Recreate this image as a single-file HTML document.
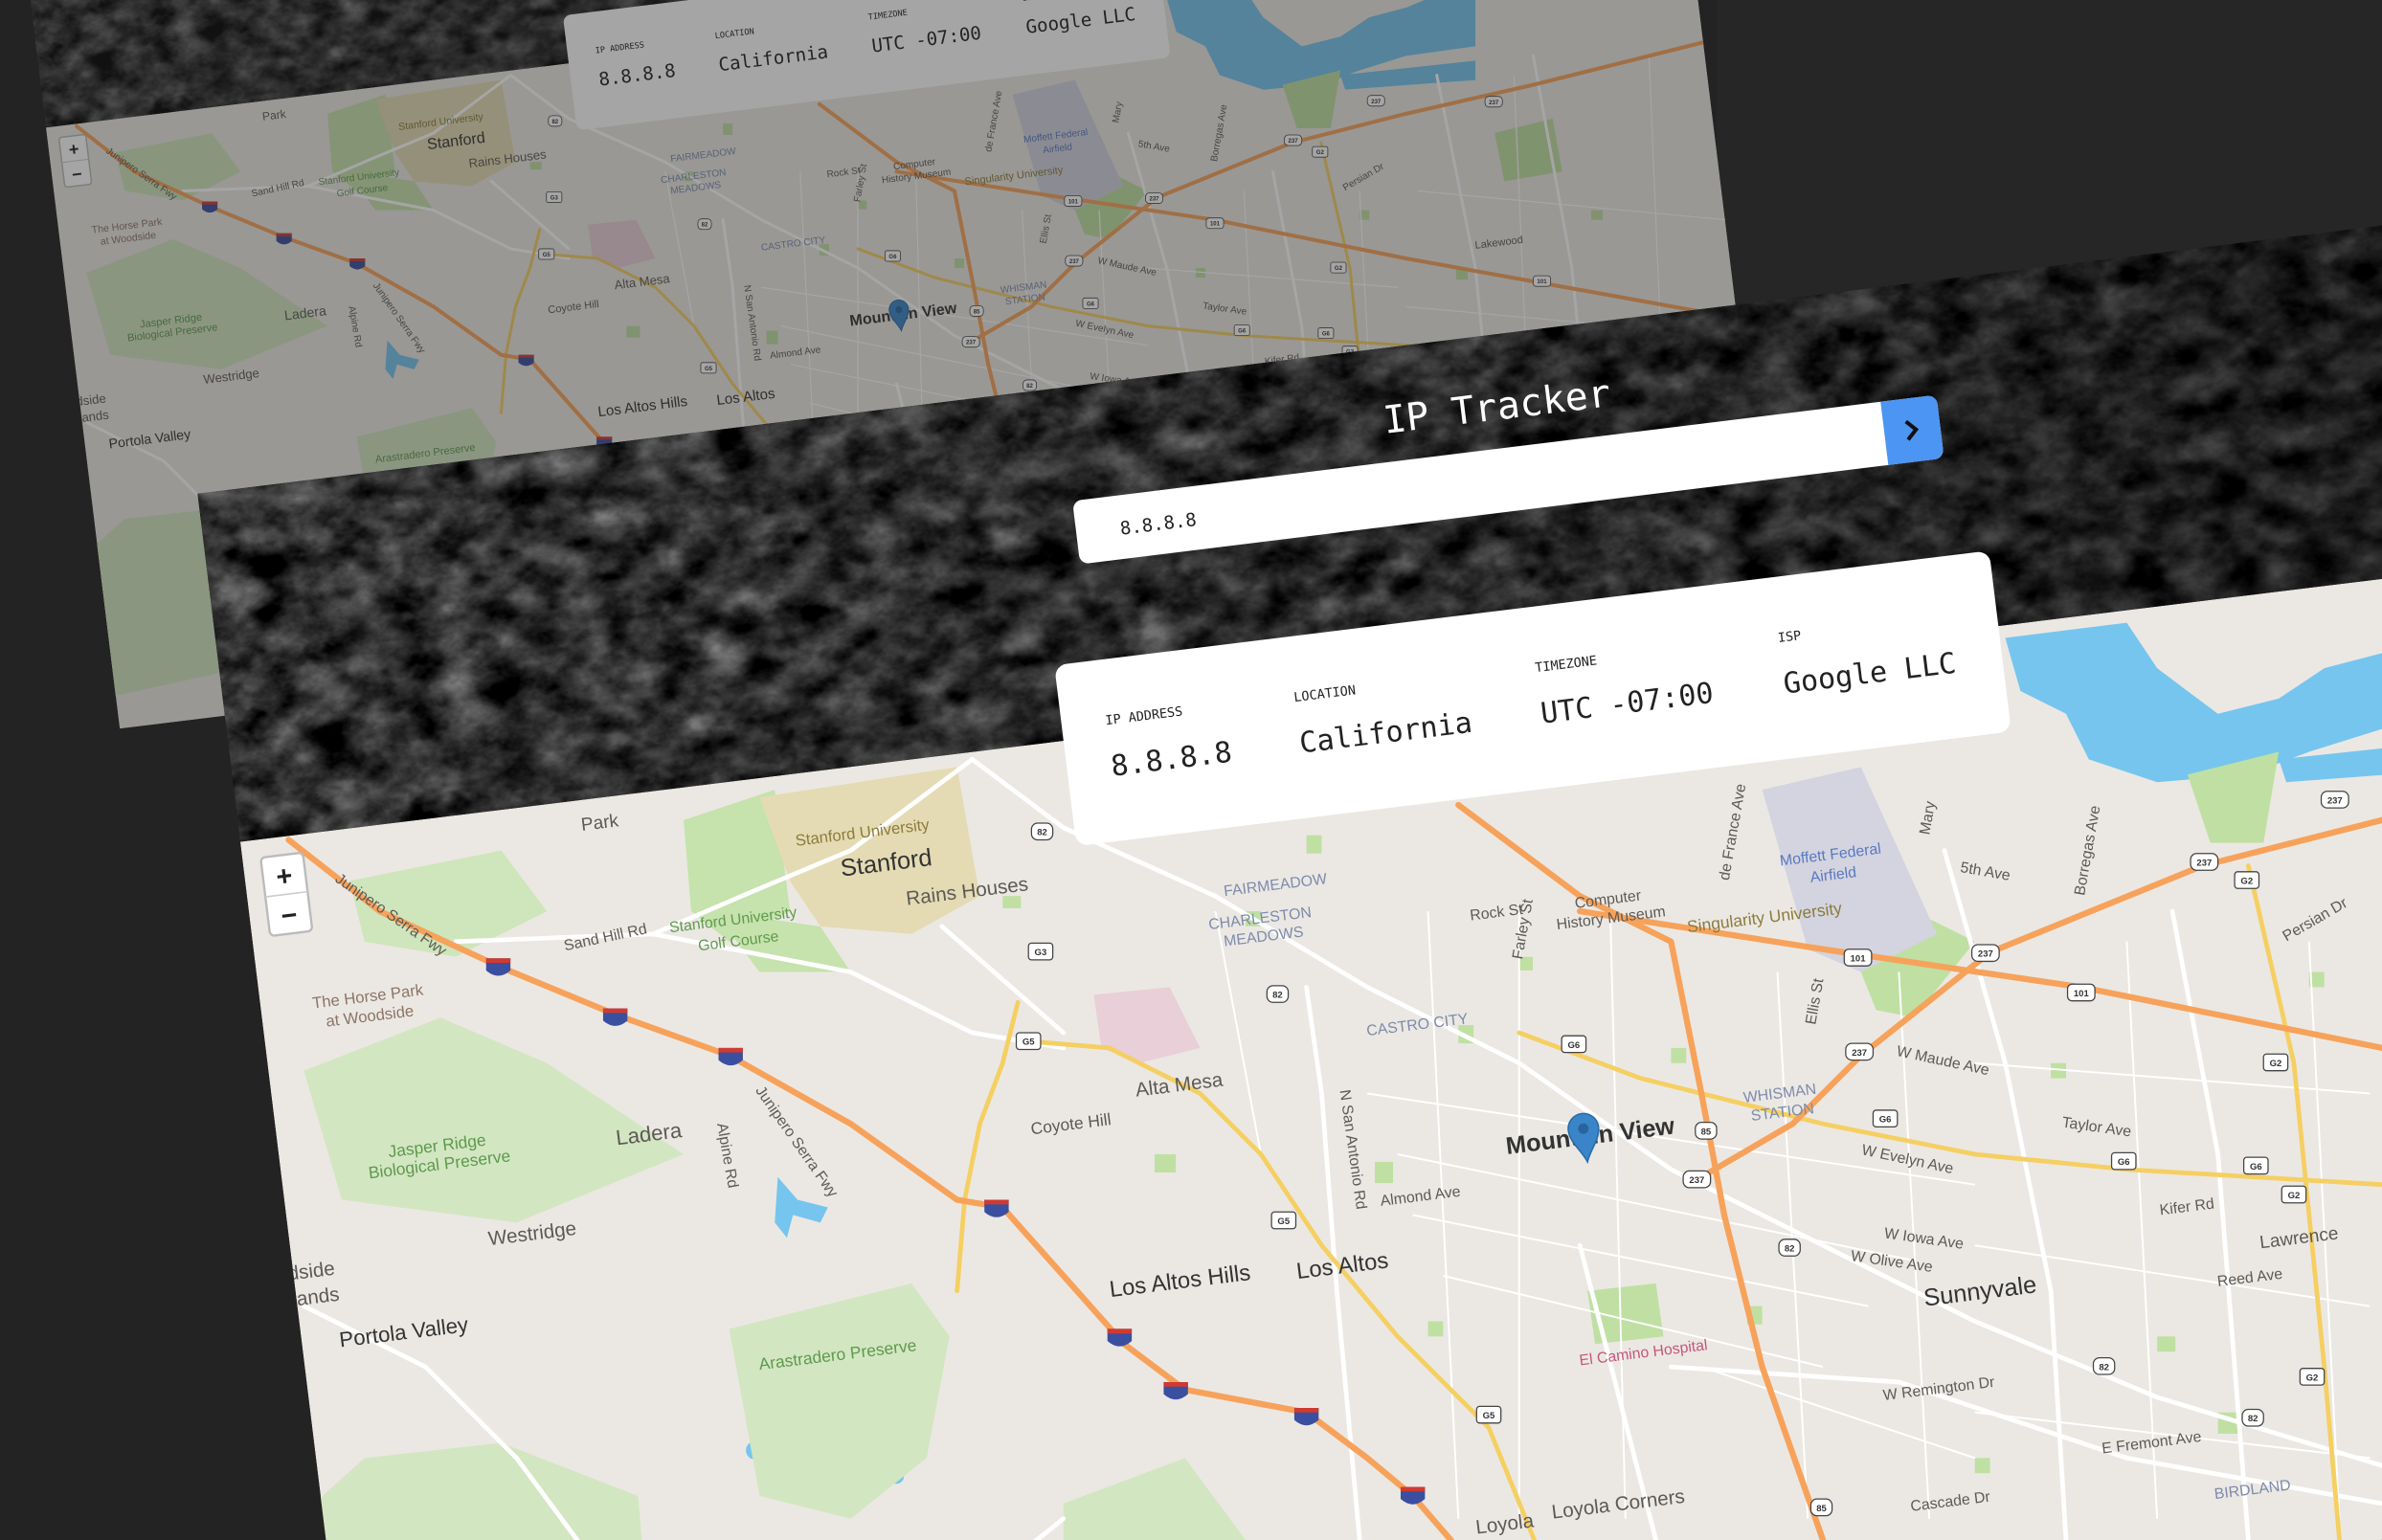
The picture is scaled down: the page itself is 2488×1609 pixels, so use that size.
<!DOCTYPE html>
<html><head><meta charset="utf-8"><style>
html,body{margin:0;padding:0;background:#232323;overflow:hidden;width:2488px;height:1609px}
svg{display:block;position:absolute;left:0;top:0}
.m{font-family:"DejaVu Sans Mono","Liberation Mono",monospace}
.l{font-family:"Liberation Sans Narrow","Liberation Sans",sans-serif;fill:#5d5a55}
.s{font-family:"Liberation Sans",sans-serif;font-size:6px;font-weight:bold;fill:#333;text-anchor:middle}
</style></head><body>
<svg width="2488" height="1609" viewBox="0 0 1568 1014" preserveAspectRatio="none" xmlns="http://www.w3.org/2000/svg">
<defs>
<filter id="tex" x="0" y="0" width="100%" height="100%" color-interpolation-filters="sRGB">
<feTurbulence type="fractalNoise" baseFrequency="0.035 0.05" numOctaves="5" seed="7"/>
<feColorMatrix type="matrix" values="0.33 0.33 0.33 0 0 0.33 0.33 0.33 0 0 0.33 0.33 0.33 0 0 0 0 0 0 1"/>
<feComponentTransfer><feFuncR type="linear" slope="1.3" intercept="-0.45"/><feFuncG type="linear" slope="1.3" intercept="-0.45"/><feFuncB type="linear" slope="1.3" intercept="-0.45"/></feComponentTransfer>
</filter>
<linearGradient id="hg" x1="0" y1="0" x2="1" y2="0"><stop offset="0" stop-color="#000" stop-opacity="0"/><stop offset="0.5" stop-color="#000" stop-opacity="0.2"/><stop offset="1" stop-color="#000" stop-opacity="0.6"/></linearGradient>
<clipPath id="mapclip"><rect x="0" y="231" width="1716" height="628"/></clipPath>
<clipPath id="hdclip"><rect x="0" y="0" width="1716" height="232"/></clipPath>
<g id="sh"><path d="M-8,-6 L8,-6 L8,2 Q0,9 -8,2Z" fill="#3a4fa0"/><path d="M-8,-6 L8,-6 L8,-3 L-8,-3Z" fill="#d03a30"/></g>
<g id="screen">
 <g clip-path="url(#hdclip)">
  <rect x="0" y="0" width="1716" height="232" fill="#161616"/>
  <rect x="0" y="0" width="1716" height="232" filter="url(#tex)"/>
  <rect x="0" y="0" width="1716" height="232" fill="url(#hg)"/>
 </g>
 <g clip-path="url(#mapclip)">
  <rect x="0" y="231" width="1716" height="628" fill="#ebe8e3"/>
  <g transform="rotate(7) translate(-130,-325)">
   <!-- water -->
   <path d="M1320,420 L1400,410 L1420,440 L1460,470 L1500,460 L1530,440 L1568,430 L1640,400 L1640,470 L1568,480 L1520,495 L1480,510 L1420,515 L1375,500 L1360,470 L1330,455 Z" fill="#76c5ef"/>
   <path d="M1500,500 L1640,485 L1640,505 L1505,515Z" fill="#76c5ef"/>
   <path d="M512,775 L525,790 L545,795 L540,805 L522,800 L518,815 L510,805Z" fill="#76c5ef"/>
   <path d="M235,725 L242,730 L250,752 L240,755Z" fill="#76c5ef"/>
   <circle cx="542" cy="585" r="7" fill="#76c5ef"/>
   <circle cx="497" cy="955" r="6" fill="#76c5ef"/>
   <circle cx="590" cy="972" r="5" fill="#76c5ef"/>
   <!-- greens -->
   <path d="M200,705 L290,670 L360,700 L450,760 L340,805 L225,790 Z" fill="#d3e6c2"/>
   <path d="M480,875 L600,845 L625,880 L610,960 L560,1000 L500,985 Z" fill="#d3e6c2"/>
   <path d="M230,580 L330,560 L360,600 L300,630 L240,620Z" fill="#cfe5bb"/>
   <path d="M450,540 L510,520 L520,600 L480,620 L455,600Z" fill="#c6e2ad"/>
   <path d="M500,525 L630,505 L645,590 L600,615 L540,610 L520,580Z" fill="#e4dbb4"/>
   <path d="M470,600 L540,610 L560,640 L500,640Z" fill="#c6e2ad"/>
   <path d="M1225,640 L1270,605 L1300,620 L1260,670 L1235,665Z" fill="#bfe0a2"/>
   <path d="M1440,510 L1500,495 L1490,555 L1455,555Z" fill="#bfe0a2"/>
   <path d="M180,1014 L240,960 L330,950 L420,985 L430,1100 L200,1150Z" fill="#d3e6c2"/>
   <path d="M700,990 L780,960 L820,1014 L800,1080 L700,1060Z" fill="#d3e6c2"/>
   <path d="M720,655 L770,650 L790,690 L750,700 L725,690Z" fill="#e9cfd7"/>
   <path d="M1045,850 L1090,845 L1095,880 L1050,885Z" fill="#bfe0a2"/>
   <path d="M1160,520 L1225,505 L1275,615 L1225,640 L1190,625Z" fill="#d3d4e0"/>
   <path d="M1660,560 L1720,545 L1730,600 L1670,610Z" fill="#bfe0a2"/>
   <path d="M1600,860 L1660,850 L1670,900 L1610,905Z" fill="#d3e6c2"/>
   <g fill="#bfe0a2">
    <rect x="905" y="765" width="12" height="14"/><rect x="960" y="675" width="10" height="12"/><rect x="760" y="760" width="14" height="12"/>
    <rect x="820" y="600" width="10" height="10"/><rect x="1000" y="630" width="9" height="9"/><rect x="1100" y="690" width="10" height="10"/>
    <rect x="1350" y="700" width="10" height="10"/><rect x="1420" y="880" width="12" height="10"/><rect x="1300" y="960" width="10" height="10"/>
    <rect x="1150" y="860" width="10" height="12"/><rect x="660" y="590" width="12" height="8"/><rect x="1520" y="640" width="10" height="10"/>
    <rect x="1460" y="930" width="14" height="14"/><rect x="860" y="550" width="10" height="12"/><rect x="940" y="870" width="10" height="10"/>
    <rect x="1620" y="700" width="12" height="12"/><rect x="1700" y="780" width="10" height="10"/><rect x="1760" y="640" width="12" height="10"/>
    <rect x="900" y="1050" width="12" height="12"/><rect x="1100" y="1040" width="10" height="10"/><rect x="1300" y="1030" width="12" height="12"/>
   </g>
   <!-- white roads -->
   <g fill="none" stroke="#fff" stroke-width="3" stroke-linecap="round">
    <path d="M640,500 L700,545 L800,590 L900,650 L1000,700 L1100,770 L1200,820 L1300,870 L1420,920 L1568,965 L1700,1000"/>
    <path d="M430,615 L500,585 L560,560 L640,500"/>
    <path d="M620,610 L700,680"/>
    <path d="M860,650 L870,720 L880,850 L895,1014 L905,1150"/>
    <path d="M300,620 L430,615 L560,640 L640,680 L700,690"/>
    <path d="M1280,560 L1320,700 L1350,850 L1360,1014 L1365,1100"/>
    <path d="M1430,600 L1460,760 L1480,1014"/>
    <path d="M1100,900 L1250,910 L1400,960 L1568,990 L1800,1010"/>
    <path d="M200,860 L280,900 L340,960 L380,1014 L420,1120"/>
    <path d="M1040,820 L1090,1014 L1110,1100"/>
    <path d="M1600,500 L1640,700 L1660,900"/>
    <path d="M1700,480 L1740,700 L1760,900"/>
    <path d="M600,1100 L650,1040 L700,1000"/>
   </g>
   <g fill="none" stroke="#fff" stroke-width="1.2">
    <path d="M900,720 L1300,780 M920,760 L1260,830 M930,800 L1230,860 M950,840 L1200,900 M1000,600 L1000,1000 M1060,600 L1070,1000 M1170,640 L1190,1000 M1250,640 L1270,1000 M1400,620 L1420,1000 M1520,620 L1540,1000 M1300,700 L1560,720 M1300,820 L1560,860 M1300,930 L1560,960 M800,600 L830,760 M940,600 L960,1000 M1120,900 L1300,960 M1568,740 L1900,770 M1568,860 L1900,880 M1580,620 L1900,650 M1680,500 L1700,960 M1820,480 L1840,960"/>
   </g>
   <!-- yellow roads -->
   <g fill="none" stroke="#f5cf62" stroke-width="3" stroke-linecap="round">
    <path d="M670,660 L660,700 L645,740 L635,790 L630,850"/>
    <path d="M670,685 L730,690 L790,720 L830,760 L870,820 L920,880 L980,940 L1010,1014 L1030,1080"/>
    <path d="M1000,680 L1080,710 L1200,740 L1300,760 L1400,770 L1568,780 L1900,800"/>
    <path d="M1480,570 L1510,700 L1530,900 L1540,1014"/>
   </g>
   <!-- orange roads -->
   <g fill="none" stroke="#f7a25b" stroke-width="4" stroke-linecap="round" stroke-linejoin="round">
    <path d="M190,553 L250,600 L330,637 L405,668 L480,695 L560,740 L630,790 L660,795 L700,840 L740,885 L780,915 L860,930 L900,960 L930,985 L955,1014 L990,1060 L1030,1120"/>
    <path d="M960,530 L1040,590 L1100,620 L1120,720 L1135,800 L1160,900 L1200,1014 L1220,1080"/>
    <path d="M1040,600 L1200,625 L1370,650 L1568,690 L1900,750"/>
    <path d="M1900,460 L1700,510 L1568,540 L1450,570 L1310,627 L1225,695 L1180,740 L1120,775"/>
   </g>
   <!-- shields -->
   <g fill="#fff" stroke="#444" stroke-width="0.8">
    <rect x="679" y="542" width="14" height="11" rx="4"/><rect x="677" y="621" width="16" height="11" rx="2"/><rect x="669" y="680" width="16" height="11" rx="2"/>
    <rect x="834" y="649" width="14" height="11" rx="4"/><rect x="1028" y="682" width="16" height="11" rx="2"/><rect x="1116" y="739" width="14" height="11" rx="4"/>
    <rect x="1108" y="771" width="18" height="11" rx="4"/><rect x="1171" y="816" width="14" height="11" rx="4"/><rect x="837" y="798" width="16" height="11" rx="2"/>
    <rect x="972" y="926" width="16" height="11" rx="2"/><rect x="1215" y="687" width="18" height="11" rx="4"/><rect x="1298" y="622" width="18" height="11" rx="4"/>
    <rect x="1442" y="562" width="18" height="11" rx="4"/><rect x="1528" y="521" width="18" height="11" rx="4"/><rect x="1214" y="625" width="18" height="11" rx="3"/>
    <rect x="1361" y="648" width="18" height="11" rx="3"/><rect x="1471" y="574" width="16" height="11" rx="2"/><rect x="1490" y="694" width="16" height="11" rx="2"/>
    <rect x="1233" y="731" width="16" height="11" rx="2"/><rect x="1390" y="759" width="16" height="11" rx="2"/><rect x="1477" y="762" width="16" height="11" rx="2"/>
    <rect x="1502" y="781" width="16" height="11" rx="2"/><rect x="1378" y="894" width="14" height="11" rx="4"/><rect x="1476" y="928" width="14" height="11" rx="4"/>
    <rect x="1514" y="901" width="16" height="11" rx="2"/><rect x="1192" y="987" width="14" height="11" rx="4"/>
    <rect x="1700" y="708" width="18" height="11" rx="3"/><rect x="1650" y="522" width="18" height="11" rx="4"/>
   </g>
   <g class="s">
    <text x="686" y="550">82</text><text x="685" y="629">G3</text><text x="677" y="688">G5</text><text x="841" y="657">82</text><text x="1036" y="690">G6</text>
    <text x="1123" y="747">85</text><text x="1117" y="779">237</text><text x="1178" y="824">82</text><text x="845" y="806">G5</text><text x="980" y="934">G5</text>
    <text x="1224" y="695">237</text><text x="1307" y="630">237</text><text x="1451" y="570">237</text><text x="1537" y="529">237</text><text x="1223" y="633">101</text>
    <text x="1370" y="656">101</text><text x="1479" y="582">G2</text><text x="1498" y="702">G2</text><text x="1241" y="739">G6</text><text x="1398" y="767">G6</text>
    <text x="1485" y="770">G6</text><text x="1510" y="789">G2</text><text x="1385" y="902">82</text><text x="1483" y="936">82</text><text x="1522" y="909">G2</text><text x="1199" y="995">85</text>
    <text x="1709" y="716">101</text><text x="1659" y="530">237</text>
   </g>
   <use href="#sh" x="328" y="637"/><use href="#sh" x="405" y="670"/><use href="#sh" x="481" y="696"/><use href="#sh" x="656" y="796"/>
   <use href="#sh" x="737" y="881"/><use href="#sh" x="774" y="916"/><use href="#sh" x="860" y="933"/><use href="#sh" x="930" y="985"/>
   <!-- labels -->
   <g class="l" font-size="12">
    <text transform="translate(383,547) rotate(-7)">Park</text>
    <text transform="translate(524,557) rotate(-7)" font-size="10.5" fill="#8c7b3c">Stanford University</text>
    <text transform="translate(554,577) rotate(-7)" font-size="16" fill="#333">Stanford</text>
    <text transform="translate(597,596) rotate(-7)" font-size="13">Rains Houses</text>
    <text transform="translate(372,626) rotate(-12)" font-size="10">Sand Hill Rd</text>
    <text transform="translate(441,614) rotate(-7)" font-size="10" fill="#5e9a4c">Stanford University</text>
    <text transform="translate(460,626) rotate(-7)" font-size="10" fill="#5e9a4c">Golf Course</text>
    <text transform="translate(220,580) rotate(35)" font-size="10">Junipero Serra Fwy</text>
    <text transform="translate(497,718) rotate(55)" font-size="10">Junipero Serra Fwy</text>
    <text transform="translate(206,664) rotate(-7)" font-size="10.5" fill="#8c7566">The Horse Park</text>
    <text transform="translate(215,676) rotate(-7)" font-size="10.5" fill="#8c7566">at Woodside</text>
    <text transform="translate(256,762) rotate(-7)" font-size="11" fill="#5e9a4c">Jasper Ridge</text>
    <text transform="translate(243,776) rotate(-7)" font-size="11" fill="#5e9a4c">Biological Preserve</text>
    <text transform="translate(406,754) rotate(-7)" font-size="14">Ladera</text>
    <text transform="translate(472,740) rotate(80)" font-size="10">Alpine Rd</text>
    <text transform="translate(322,820) rotate(-7)" font-size="13">Westridge</text>
    <text transform="translate(190,843) rotate(-7)" font-size="13">dside</text>
    <text transform="translate(193,860) rotate(-7)" font-size="13">lands</text>
    <text transform="translate(224,887) rotate(-7)" font-size="14" fill="#333">Portola Valley</text>
    <text transform="translate(500,902) rotate(-7)" font-size="11" fill="#5e9a4c">Arastradero Preserve</text>
    <text transform="translate(748,722) rotate(-7)" font-size="13">Alta Mesa</text>
    <text transform="translate(679,747) rotate(-7)" font-size="11">Coyote Hill</text>
    <text transform="translate(731,854) rotate(-7)" font-size="15" fill="#333">Los Altos Hills</text>
    <text transform="translate(854,842) rotate(-7)" font-size="15" fill="#333">Los Altos</text>
    <text transform="translate(882,718) rotate(82)" font-size="10">N San Antonio Rd</text>
    <text transform="translate(909,794) rotate(-7)" font-size="10">Almond Ave</text>
    <text transform="translate(806,590) rotate(-7)" font-size="10" fill="#7d8bab">FAIRMEADOW</text>
    <text transform="translate(796,612) rotate(-7)" font-size="10" fill="#7d8bab">CHARLESTON</text>
    <text transform="translate(806,623) rotate(-7)" font-size="10" fill="#7d8bab">MEADOWS</text>
    <text transform="translate(900,682) rotate(-7)" font-size="10" fill="#7d8bab">CASTRO CITY</text>
    <text transform="translate(968,606) rotate(-7)" font-size="10">Rock St</text>
    <text transform="translate(1037,598) rotate(-7)" font-size="10">Computer</text>
    <text transform="translate(1025,612) rotate(-7)" font-size="10">History Museum</text>
    <text transform="translate(1111,614) rotate(-7)" font-size="11" fill="#8c7b3c">Singularity University</text>
    <text transform="translate(1172,570) rotate(-7)" font-size="10" fill="#5a78c0">Moffett Federal</text>
    <text transform="translate(1192,581) rotate(-7)" font-size="10" fill="#5a78c0">Airfield</text>
    <text transform="translate(1148,726) rotate(-7)" font-size="10" fill="#7d8bab">WHISMAN</text>
    <text transform="translate(1153,738) rotate(-7)" font-size="10" fill="#7d8bab">STATION</text>
    <text transform="translate(1248,695) rotate(12)" font-size="10">W Maude Ave</text>
    <text transform="translate(1225,760) rotate(12)" font-size="10">W Evelyn Ave</text>
    <text transform="translate(1357,742) rotate(8)" font-size="10">Taylor Ave</text>
    <text transform="translate(1240,815) rotate(8)" font-size="10">W Iowa Ave</text>
    <text transform="translate(1218,830) rotate(8)" font-size="10">W Olive Ave</text>
    <text transform="translate(1422,800) rotate(-7)" font-size="10">Kifer Rd</text>
    <text transform="translate(1488,822) rotate(-7)" font-size="12">Lawrence</text>
    <text transform="translate(1460,847) rotate(-7)" font-size="10">Reed Ave</text>
    <text transform="translate(1267,860) rotate(-7)" font-size="16" fill="#333">Sunnyvale</text>
    <text transform="translate(1040,899) rotate(-7)" font-size="10" fill="#c4567e">El Camino Hospital</text>
    <text transform="translate(1240,922) rotate(-7)" font-size="10">W Remington Dr</text>
    <text transform="translate(1384,957) rotate(-7)" font-size="10">E Fremont Ave</text>
    <text transform="translate(1258,995) rotate(-7)" font-size="10">Cascade Dr</text>
    <text transform="translate(1022,1000) rotate(-7)" font-size="13">Loyola Corners</text>
    <text transform="translate(972,1010) rotate(-7)" font-size="13">Loyola</text>
    <text transform="translate(1458,987) rotate(-7)" font-size="10" fill="#7d8bab">BIRDLAND</text>
    <text transform="translate(1290,574) rotate(10)" font-size="10">5th Ave</text>
    <text transform="translate(1505,620) rotate(-30)" font-size="10">Persian Dr</text>
    <text transform="translate(1372,590) rotate(-80)" font-size="10">Borregas Ave</text>
    <text transform="translate(1270,550) rotate(-80)" font-size="10">Mary</text>
    <text transform="translate(1138,580) rotate(-80)" font-size="10">de France Ave</text>
    <text transform="translate(1002,632) rotate(-80)" font-size="10">Farley St</text>
    <text transform="translate(1195,675) rotate(-80)" font-size="10">Ellis St</text>
    <text transform="translate(1640,680) rotate(-7)" font-size="11">Lakewood</text>
    <text transform="translate(1700,850) rotate(-7)" font-size="13">Santa Clara</text>
    <text transform="translate(992,760) rotate(-7)" font-size="16" font-weight="bold" fill="#333">Mountain View</text>
   </g>
   <g transform="translate(1045,765) rotate(-7)">
    <path d="M0,0 C-3,-8 -10,-14 -10,-22 A10,10 0 1 1 10,-22 C10,-14 3,-8 0,0Z" fill="#3a85c9" stroke="#2a6aa6" stroke-width="1"/>
    <circle cx="0" cy="-22" r="3.5" fill="#2a64a0"/>
   </g>
  </g>
  <!-- zoom control -->
  <rect x="12" y="243" width="28" height="52" rx="3" fill="#fff" stroke="#bbb" stroke-width="1.5"/>
  <line x1="12" y1="269" x2="40" y2="269" stroke="#ccc"/>
  <text x="26" y="263" text-anchor="middle" font-family="Liberation Sans,sans-serif" font-size="18" font-weight="bold" fill="#222">+</text>
  <text x="26" y="289" text-anchor="middle" font-family="Liberation Sans,sans-serif" font-size="18" font-weight="bold" fill="#222">−</text>
 </g>
 <!-- header content -->
 <text x="856" y="56" text-anchor="middle" class="m" font-size="25" fill="#fff">IP Tracker</text>
 <rect x="571" y="75" width="573" height="42" rx="6" fill="#fff"/>
 <path d="M1107,75 H1138 A6,6 0 0 1 1144,81 V111 A6,6 0 0 1 1138,117 H1107Z" fill="#4c95f2"/>
 <path d="M1122,90 L1128,96 L1122,102" fill="none" stroke="#111" stroke-width="2.5"/>
 <text x="600" y="101" class="m" font-size="12" fill="#222">8.8.8.8</text>
 <rect x="546" y="181" width="620" height="120" rx="8" fill="#fff"/>
 <g class="m" fill="#222">
  <text x="575" y="224" font-size="8.5">IP ADDRESS</text>
  <text x="700" y="224" font-size="8.5">LOCATION</text>
  <text x="860" y="224" font-size="8.5">TIMEZONE</text>
  <text x="1021" y="224" font-size="8.5">ISP</text>
  <text x="575" y="258" font-size="19">8.8.8.8</text>
  <text x="700" y="258" font-size="19">California</text>
  <text x="860" y="258" font-size="19">UTC -07:00</text>
  <text x="1021" y="258" font-size="19">Google LLC</text>
 </g>
</g>
</defs>
<rect width="1568" height="1014" fill="#232323"/>
<rect x="1130" y="0" width="438" height="200" fill="#262626"/>
<g transform="translate(-70.2,-268) scale(0.635) translate(130,325) rotate(-7)">
 <use href="#screen"/>
 <rect x="0" y="0" width="1716" height="859" fill="#282828" fill-opacity="0.42"/>
</g>
<g transform="translate(130,325) rotate(-7)">
 <use href="#screen"/>
</g>
</svg>
</body></html>
